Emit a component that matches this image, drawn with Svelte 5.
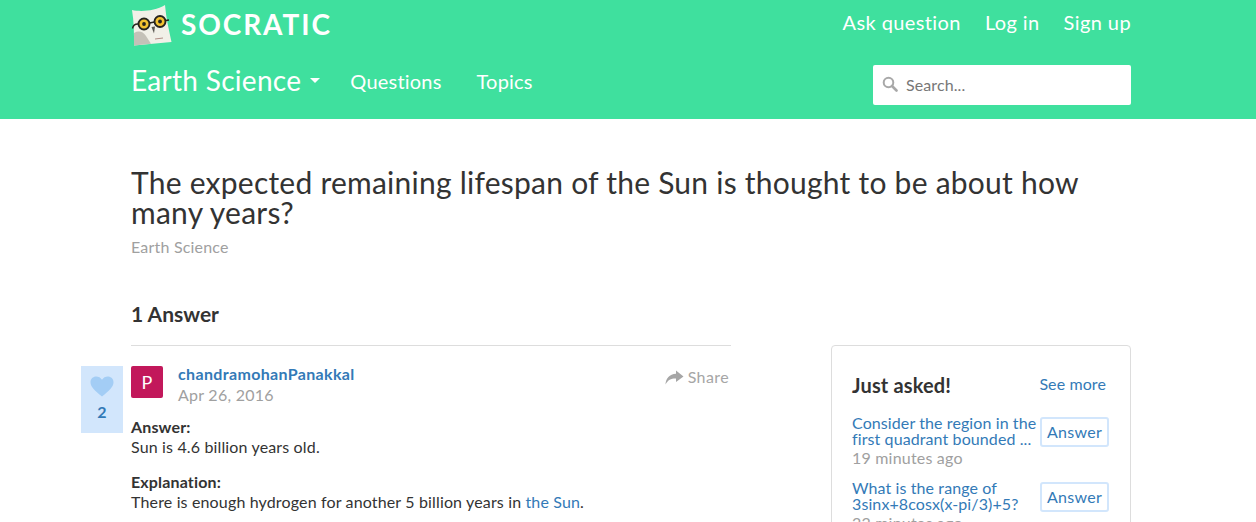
<script>
	const recent = [
		{ title: 'Consider the region in the first quadrant bounded ...', time: '19 minutes ago' },
		{ title: 'What is the range of 3sinx+8cosx(x-pi/3)+5?', time: '22 minutes ago' }
	];
</script>

<header class="top">
	<div class="wrap">
		<div class="row-one">
			<a class="brand" href="#home">
				<svg class="owl" width="41" height="46" viewBox="0 0 41 46">
					<path d="M1 10 C10 12 24 11 34 5 C35 18 38 30 40.500 42 L3 45.500 C3 33 3 22 1 10 Z" fill="#f1f0e8" />
					<path d="M3 45.500 L3 33 Q10 29 15 36 L20 43.800 Z" fill="#c4c1b8" />
					<circle cx="13" cy="24" r="5.500" fill="#f2c230" stroke="#26241f" stroke-width="1.900" />
					<circle cx="29" cy="21.500" r="5.500" fill="#f2c230" stroke="#26241f" stroke-width="1.900" />
					<circle cx="13" cy="24" r="1.900" fill="#26241f" />
					<circle cx="29" cy="21.500" r="1.900" fill="#26241f" />
					<path d="M7.500 24 Q2.500 23.500 1.500 28.500 M18.500 23 L23.500 22 M34.500 20.500 L38 20" fill="none" stroke="#26241f" stroke-width="1.400" />
					<path d="M20.500 27 L24 26.500 L23 33.500 Z" fill="#5a5852" />
					<path d="M24 39 L32 38" stroke="#b08d85" stroke-width="1" />
				</svg>
				<span>SOCRATIC</span>
			</a>
			<nav class="account">
				<a href="#ask">Ask question</a>
				<a href="#login">Log in</a>
				<a href="#signup">Sign up</a>
			</nav>
		</div>
		<div class="row-two">
			<a class="subject" href="#subject">Earth Science<span class="caret"></span></a>
			<a class="tab" href="#questions">Questions</a>
			<a class="tab" href="#topics">Topics</a>
			<label class="search">
				<svg width="16" height="16" viewBox="0 0 16 16">
					<circle cx="6.500" cy="6.500" r="4.800" fill="none" stroke="#a8a8a8" stroke-width="2" />
					<path d="M10 10 L14.500 14.500" stroke="#a8a8a8" stroke-width="2.600" stroke-linecap="round" />
				</svg>
				<input type="text" placeholder="Search..." />
			</label>
		</div>
	</div>
</header>

<main class="wrap">
	<h1>The expected remaining lifespan of the Sun is thought to be about how many years?</h1>
	<a class="crumb" href="#subject">Earth Science</a>

	<div class="columns">
		<section class="answers">
			<h2>1 Answer</h2>
			<article class="answer">
				<div class="vote">
					<svg width="24" height="21" viewBox="0 0 24 21">
						<path d="M12 20.500 C5 14.500 0.500 11 0.500 6.200 C0.500 2.800 3 0.500 6.200 0.500 C8.500 0.500 10.800 1.700 12 3.800 C13.200 1.700 15.500 0.500 17.800 0.500 C21 0.500 23.500 2.800 23.500 6.200 C23.500 11 19 14.500 12 20.500 Z" fill="#a3cdf5" />
					</svg>
					<b>2</b>
				</div>
				<div class="meta">
					<div class="avatar">P</div>
					<div class="who">
						<a href="#user">chandramohanPanakkal</a>
						<time>Apr 26, 2016</time>
					</div>
					<a class="share" href="#share">
						<svg width="19" height="15" viewBox="0 0 19 15">
							<path d="M11 0.500 L18.500 6.500 L11 12 L11 8.600 C6.500 8.400 3 9.800 0.500 14.500 C0.800 8.500 4.500 4 11 3.800 Z" fill="#a6a6a6" />
						</svg>
						Share
					</a>
				</div>
				<div class="body">
					<h3>Answer:</h3>
					<p>Sun is 4.6 billion years old.</p>
					<h3>Explanation:</h3>
					<p>There is enough hydrogen for another 5 billion years in <a href="#sun">the Sun</a>.</p>
				</div>
			</article>
		</section>

		<aside class="card">
			<div class="card-head">
				<h4>Just asked!</h4>
				<a href="#more">See more</a>
			</div>
			{#each recent as item}
				<div class="item">
					<div class="item-text">
						<a href="#q">{item.title}</a>
						<span>{item.time}</span>
					</div>
					<a class="answer-btn" href="#a">Answer</a>
				</div>
			{/each}
		</aside>
	</div>
</main>

<style>
	:global(body) {
		overflow: hidden;
		background: #fff;
		font-family: 'Lato', 'Open Sans', sans-serif;
		color: #333;
	}

	a {
		text-decoration: none;
		color: #337ab7;
	}

	.wrap {
		width: 1000px;
		margin-left: 131px;
	}

	.top {
		height: 119px;
		background: #3fe09e;
	}

	.top a {
		color: #fff;
	}

	.top .wrap {
		display: flex;
		flex-direction: column;
	}

	.row-one {
		height: 46px;
		display: flex;
		justify-content: space-between;
		align-items: center;
	}

	.brand {
		display: flex;
		align-items: center;
		gap: 9px;
		font-size: 28px;
		font-weight: 700;
		letter-spacing: 1.9px;
	}

	.brand span {
		margin-top: 2px;
	}

	.account {
		display: flex;
		gap: 24px;
		font-size: 20px;
		letter-spacing: 0.4px;
		margin-top: -2px;
	}

	.row-two {
		height: 73px;
		display: flex;
		align-items: center;
	}

	.subject {
		font-size: 28px;
		letter-spacing: 0.3px;
		display: flex;
		align-items: center;
		margin-top: -5px;
	}

	.caret {
		margin-left: 9px;
		border-top: 5px solid #fff;
		border-left: 5.500px solid transparent;
		border-right: 5.500px solid transparent;
	}

	.tab {
		margin-left: 35px;
		margin-top: -4px;
		font-size: 20px;
		letter-spacing: 0.2px;
	}

	.subject + .tab {
		margin-left: 30px;
	}

	.search {
		margin-left: auto;
		width: 258px;
		height: 40px;
		background: #fff;
		border-radius: 2px;
		display: flex;
		align-items: center;
		padding-left: 9px;
		gap: 8px;
		box-sizing: border-box;
		margin-top: 5px;
	}

	.search svg {
		margin-top: -3px;
	}

	.search input {
		border: 0;
		outline: 0;
		flex: 1;
		min-width: 0;
		font: inherit;
		font-size: 16px;
		padding: 0;
		margin-top: -2px;
		letter-spacing: 0.1px;
	}

	.search input::placeholder {
		color: #777;
		opacity: 1;
	}

	h1 {
		margin: 48px 0 0;
		font-size: 30px;
		font-weight: 400;
		line-height: 30px;
		letter-spacing: 0.24px;
		color: #333;
	}

	.crumb {
		display: block;
		margin-top: 10px;
		font-size: 16px;
		letter-spacing: 0.2px;
		color: #a0a0a0;
	}

	.columns {
		display: flex;
		justify-content: space-between;
		align-items: flex-start;
	}

	.answers {
		width: 600px;
	}

	h2 {
		margin: 44px 0 0;
		font-size: 21px;
		line-height: 28px;
		padding-bottom: 17px;
		border-bottom: 1px solid #ddd;
	}

	.answer {
		position: relative;
		padding-top: 20px;
	}

	.vote {
		position: absolute;
		left: -50px;
		top: 20px;
		width: 42px;
		height: 67px;
		background: #d2e6fc;
		display: flex;
		flex-direction: column;
		align-items: center;
		padding-top: 10px;
		box-sizing: border-box;
		color: #337ab7;
		font-size: 16px;
	}

	.vote b {
		margin-top: 5px;
	}

	.meta {
		display: flex;
		align-items: flex-start;
	}

	.avatar {
		width: 32px;
		height: 32px;
		background: #c2185b;
		border-radius: 2px;
		color: #fff;
		font-size: 18px;
		display: flex;
		align-items: center;
		justify-content: center;
	}

	.who {
		margin: -3px 0 0 15px;
		display: flex;
		flex-direction: column;
		line-height: 21px;
		font-size: 16px;
		letter-spacing: 0.25px;
	}

	.who a {
		font-weight: 700;
		letter-spacing: 0.35px;
	}

	.who time {
		color: #a0a0a0;
	}

	.share {
		margin-left: auto;
		margin-right: 2px;
		display: flex;
		align-items: center;
		gap: 4px;
		color: #a6a6a6;
		font-size: 16px;
		line-height: 22px;
		letter-spacing: 0.4px;
	}

	.body {
		margin-top: 12px;
		font-size: 16px;
		line-height: 20px;
		letter-spacing: 0.15px;
	}

	h3 {
		margin: 0;
		font-size: 16px;
		line-height: 20px;
	}

	p {
		margin: 0 0 15px;
	}

	.card {
		width: 300px;
		height: 300px;
		box-sizing: border-box;
		margin-top: 89px;
		border: 1px solid #ddd;
		border-radius: 4px;
		padding: 26px 20px;
	}

	.card-head {
		display: flex;
		justify-content: space-between;
		align-items: center;
		padding-right: 4px;
		margin-bottom: 17px;
	}

	h4 {
		margin: 0;
		font-size: 20px;
		line-height: 26px;
		letter-spacing: 0.15px;
	}

	.card-head a {
		font-size: 16px;
		margin-top: -3px;
		letter-spacing: 0.1px;
	}

	.item {
		display: flex;
		justify-content: space-between;
		align-items: center;
		margin-bottom: 13px;
		margin-right: 1px;
	}

	.item-text {
		width: 186px;
		font-size: 16px;
		line-height: 16px;
		letter-spacing: 0.1px;
	}

	.item-text a {
		display: block;
	}

	.item-text span {
		display: block;
		margin-top: 1px;
		line-height: 19px;
		letter-spacing: 0.2px;
		color: #a0a0a0;
	}

	.answer-btn {
		width: 69px;
		height: 30px;
		box-sizing: border-box;
		border: 2px solid #d2e6fc;
		border-radius: 3px;
		display: flex;
		align-items: center;
		justify-content: center;
		font-size: 16px;
		letter-spacing: 0.3px;
		margin-top: -19px;
	}
</style>
